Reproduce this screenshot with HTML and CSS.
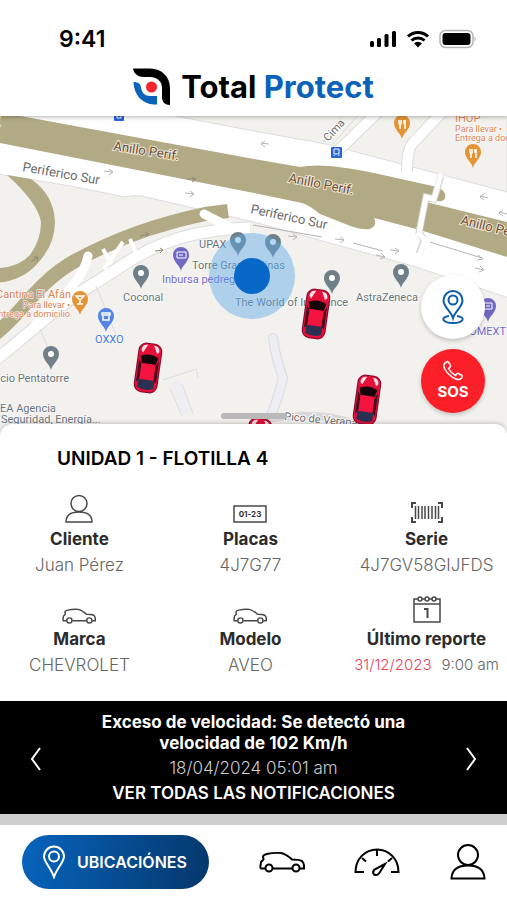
FILE: index.html
```html
<!DOCTYPE html>
<html lang="es">
<head>
    <meta charset="UTF-8">
    <meta name="viewport" content="width=device-width, initial-scale=1.0">
    <title>Total Protect</title>
    <link rel="stylesheet" href="styles.css">
</head>
<body>
    <header class="header">
        <div class="status-bar">
            <span class="clock">9:41</span>
            <div class="status-icons">
                <svg width="28" height="18" viewBox="0 0 28 18">
                    <rect x="1" y="11" width="4" height="6" rx="1.5"/>
                    <rect x="8" y="8" width="4" height="9" rx="1.5"/>
                    <rect x="15.5" y="4" width="4" height="13" rx="1.5"/>
                    <rect x="23" y="1" width="4" height="16" rx="1.5"/>
                </svg>
                <svg width="24" height="18" viewBox="0 0 24 18">
                    <path d="M2 6.5a14.5 14.5 0 0 1 20 0M5.5 10.5a9.5 9.5 0 0 1 13 0" fill="none" stroke="#000" stroke-width="3"/>
                    <path d="M8 13.2a6 6 0 0 1 8 0L12 17.5z"/>
                </svg>
                <svg width="38" height="20" viewBox="0 0 38 20">
                    <rect x="1" y="1.5" width="33" height="17" rx="5.5" fill="#fff" stroke="#b5b5b5" stroke-width="1.5"/>
                    <rect x="3.5" y="4" width="28" height="12" rx="3"/>
                    <path d="M35.5 7.5q2.5 2.5 0 5z" fill="#b5b5b5"/>
                </svg>
            </div>
        </div>
        <div class="brand">
            <svg width="37" height="37" viewBox="0 0 37 37">
                <path d="M0 .5H17C29 .5 37 9 37 20V37C32 37 29 34 29 29V20C29 13 24 9 17 9H11C5 9 1 6 0 .5z"/>
                <path d="M.5 14C5 14 8 16 8 20C9 25 12 28 17 28H24V36.5H21C9 36 1 27 .5 14z" fill="#0b62b9"/>
                <circle cx="18.5" cy="19" r="5.5" fill="#f5232d"/>
            </svg>
            <span class="brand-name">Total <span class="brand-blue">Protect</span></span>
        </div>
    </header>

    <main>
        <section class="map">
            <svg class="map-canvas" viewBox="0 116 507 320" preserveAspectRatio="xMidYMin slice">
                <defs>
                    <g id="pin">
                        <path d="M0 14C-1 8-8 5-8-2A8 8 0 0 1 8-2C8 5 1 8 0 14z"/>
                    </g>
                    <g id="car">
                        <rect x="-12" y="-25" width="24" height="50" rx="8" fill="#7d0c2c"/>
                        <rect x="-11" y="-24" width="22" height="48" rx="7" fill="#e4103a"/>
                        <path d="M-9-17Q-9-23-3-23L-7-15zM9-17Q9-23 3-23L7-15z" fill="#ffe1e5"/>
                        <path d="M-9-11Q0-16 9-11L7-4H-7z" fill="#16060c"/>
                        <path d="M-10-8L-7-3V12L-10 15zM10-8L7-3V12L10 15z" fill="#4a0a1e"/>
                        <rect x="-7" y="-4" width="14" height="16" fill="#f5143f"/>
                        <path d="M-8 12H8L8 20Q0 24-8 20z" fill="#2c3050"/>
                    </g>
                </defs>
                <rect x="0" y="116" width="507" height="320" fill="#fff"/>

                <!-- manzanas -->
                <g fill="#f2f1ed" stroke="#dcdcdc">
                    <path d="M170 115L254 131L326 144L507 192V115z"/>
                    <path d="M-2 174L70 186L125 197Q138 194 150 198L254 222L413 266L509 298V440H-2z"/>
                </g>

                <!-- calles -->
                <g fill="none" stroke-linejoin="round">
                    <path d="M378 112L343 146L336 152M442 112L413 143Q407 149 407 172" stroke="#dcdcdc" stroke-width="12"/>
                    <path d="M378 112L343 146L336 152M442 112L413 143Q407 149 407 172" stroke="#fff" stroke-width="10"/>
                    <path d="M343 115L323 142M358 115L333 144" stroke="#dcdcdc"/>
                    <path d="M7 175L31 179Q54 195 55 222Q55 245 37 264Q22 281-4 283V268Q18 268 30 255Q41 240 41 222Q38 203 7 175z" fill="#b1aa84"/>
                    <path d="M-5 334C20 316 37 282 75 261Q133 229 205 214L228 211" stroke="#b1aa84" stroke-width="14"/>
                    <path d="M-6 361C26 337 60 303 90 286C132 261 162 230 250 228" stroke="#dcdcdc" stroke-width="13"/>
                    <path d="M-6 361C26 337 60 303 90 286C132 261 162 230 250 228" stroke="#fff" stroke-width="11"/>
                    <path d="M88 256C82 285 54 302 35 325M204 214L235 230" stroke="#fff" stroke-width="9" stroke-linecap="round"/>
                    <path d="M103 249L111 264M123 242L104 269M130 239L138 258" stroke="#fff" stroke-width="4"/>
                    <path d="M273 338Q276 360 283 378Q279 395 271 416" stroke="#d8dbe2" stroke-width="10" stroke-linecap="round"/>
                    <path d="M273 338Q276 360 283 378Q279 395 271 416" stroke="#eceef1" stroke-width="8" stroke-linecap="round"/>
                    <path d="M96 286L108 315L120 345M40 329L46 343L52 366M163 380L196 369L198 378M170 388L182 416M182 384L193 414" stroke="#dadce4"/>
                    <path d="M250 422Q312 409 352 423" stroke="#d8d8d8" stroke-width="8"/>
                    <path d="M176 381L186 414" stroke="#eceef1" stroke-width="9"/>
                </g>

                <!-- anillo periferico -->
                <path d="M-2 115H15L254 159L300 167Q322 162 374 173L437 187Q447 191 445 198Q443 202 438 201L426 202L507 222V257L420 230L374 218Q378 225 370 229Q363 230 353 227L320 214Q309 205 302 203L254 193L0 143z" fill="#b1aa84"/>
                <path d="M441 176L434 199L426 197L419 232L424 240L419 254" fill="none" stroke="#d9d9d9" stroke-width="7"/>
                <path d="M441 174L434 199L426 197L419 234L425 240L419 256" fill="none" stroke="#fff" stroke-width="5"/>

                <!-- sentido de circulacion -->
                <g fill="none" stroke="#b4b4b4">
                    <path d="M104 171L112 172M109 169L113 172L109 175M185 193L194 194M190 191L194 194L190 197M269 144L261 143M265 141L261 144L265 147M288 236L297 237M293 234L297 237L293 240M335 239L344 240M340 237L344 240L340 243M390 250L399 251M395 248L399 251L395 254M376 255L385 257M381 253L385 257L380 259M488 198L480 196M484 194L480 197L484 200M507 214L499 212M503 210L499 213L503 216M430 242L482 258M478 255L483 259L477 260M475 268L484 270M480 266L484 270L479 272M253 225L322 237M353 243L383 251"/>
                    <path d="M187 179L196 179M192 177L196 179L192 182M140 236L149 234M145 232L149 234L146 237M155 251L163 250M160 248L163 250L160 253M31 262L38 257M34 257L38 257L37 261" stroke="#8f8a70"/>
                </g>

                <g class="road-name road-name-dark">
                    <text transform="translate(1 127) rotate(11)" text-anchor="end">Anillo Perif.</text>
                    <text transform="translate(113 150) rotate(9)">Anillo Perif.</text>
                    <text transform="translate(288 182) rotate(11)">Anillo Perif.</text>
                    <text transform="translate(460 224) rotate(14)">Anillo Perif.</text>
                </g>
                <g class="road-name">
                    <text transform="translate(22 171) rotate(10)">Periferico Sur</text>
                    <text transform="translate(250 213) rotate(12)">Periferico Sur</text>
                    <text class="road-small" transform="translate(328 142) rotate(-47)">Cima</text>
                    <text class="road-small" transform="translate(284 420) rotate(5)">Pico de Verapaz</text>
                </g>

                <!-- lugares -->
                <g fill="#6f8088">
                    <use href="#pin" x="238" y="242"/><use href="#pin" x="273" y="244"/>
                    <use href="#pin" x="141" y="275"/><use href="#pin" x="51" y="356"/>
                    <use href="#pin" x="332" y="280"/><use href="#pin" x="401" y="274"/>
                </g>
                <g fill="#fff">
                    <circle cx="238" cy="240" r="3"/><circle cx="273" cy="242" r="3"/>
                    <circle cx="141" cy="273" r="3"/><circle cx="51" cy="354" r="3"/>
                    <circle cx="332" cy="278" r="3"/><circle cx="401" cy="272" r="3"/>
                </g>
                <g fill="#e59435">
                    <use href="#pin" x="402" y="125"/><use href="#pin" x="473" y="154"/><use href="#pin" x="80" y="301"/>
                </g>
                <path d="M399 120V123Q401 126 401 123V120M400 124V129M405 120V129M404 120V124M470 149V152Q472 155 472 152V149M471 153V158M476 149V158M475 149V153M76 296H84L80 300zM80 300V304M77 304H83" fill="none" stroke="#fff" stroke-width="1.5"/>
                <use href="#pin" x="106" y="318" fill="#5485e4"/>
                <path d="M102 313H110V315H102zM103 316V320H109V316" fill="none" stroke="#fff" stroke-width="1.5"/>
                <g fill="#7268c4"><use href="#pin" x="181" y="257"/><use href="#pin" x="488" y="308"/></g>
                <path d="M177 252H186V258H177zM179 255H183M484 303H492V309H484zM486 306H490" fill="none" stroke="#fff"/>
                <g fill="#2864d4">
                    <rect x="331" y="147" width="11" height="11" rx="1"/><rect x="114" y="111" width="10" height="10" rx="1"/>
                    <path d="M334 149H339V154H334zM334 155V156M339 155V156M117 115H121V118H117z" fill="none" stroke="#fff"/>
                </g>

                <g class="place">
                    <text x="199" y="248">UPAX</text>
                    <text x="192" y="269">Torre Gran Molinas</text>
                    <text x="123" y="301">Coconal</text>
                    <text x="235" y="306">The World of Insurance</text>
                    <text x="356" y="301">AstraZeneca</text>
                    <text x="69" y="382" text-anchor="end">Edificio Pentatorre</text>
                    <text x="0" y="412">EA Agencia</text>
                    <text x="1" y="423">Seguridad, Energía...</text>
                    <text class="blue" x="95" y="343">OXXO</text>
                    <text class="purple" x="162" y="283">Inbursa pedregal</text>
                    <text class="purple" x="506" y="335" text-anchor="end">COMEXT</text>
                    <text class="orange" x="71" y="298" text-anchor="end">Cantina El Afán</text>
                    <text class="orange tiny" x="70" y="308" text-anchor="end">Para llevar •</text>
                    <text class="orange tiny" x="70" y="317" text-anchor="end">Entrega a domicilio</text>
                    <text class="orange" x="455" y="122">IHOP</text>
                    <text class="orange tiny" x="455" y="132">Para llevar •</text>
                    <text class="orange tiny" x="455" y="141">Entrega a domicilio</text>
                </g>

                <!-- posicion actual -->
                <circle cx="252" cy="276" r="43" fill="#5ca8e8" fill-opacity=".45"/>
                <circle cx="252" cy="276" r="18" fill="#0868c8"/>

                <!-- unidades -->
                <use href="#car" transform="translate(148 368) rotate(8)"/>
                <use href="#car" transform="translate(316 314) rotate(8)"/>
                <use href="#car" transform="translate(367 400) rotate(8)"/>
                <use href="#car" transform="translate(258 443) rotate(8)"/>
            </svg>
            <div class="map-buttons">
                <button class="round-button" type="button" aria-label="Ubicación">
                    <svg width="24" height="36" viewBox="0 0 24 36" fill="none" stroke="#0b5caf" stroke-width="2">
                        <path d="M12 29C10 22 2.5 18 2.5 11.5A9.5 9.5 0 0 1 21.5 11.5C21.5 18 14 22 12 29z"/>
                        <circle cx="12" cy="11" r="4.5"/>
                        <path d="M8 27C-1 28 1 34 12 34S25 28 16 27"/>
                    </svg>
                </button>
                <button class="round-button sos" type="button">
                    <svg width="22" height="22" viewBox="0 0 22 22" fill="none" stroke="#fff" stroke-width="1.5" stroke-linejoin="round">
                        <path d="M3 3L5.5 1.5Q6.5 1.5 8.5 5.5Q9 6.5 6.5 8.5Q9 13 13.5 15.5Q15.5 12.5 16.5 13.5L20 15.5Q20.5 16.5 19.5 18Q17.5 20.5 14 19Q6.5 16 2.5 8.5Q1 5 3 3z"/>
                    </svg>
                    SOS
                </button>
            </div>
            <div class="handle"></div>
        </section>

        <section class="sheet">
            <h1 class="unit-title">UNIDAD 1 - FLOTILLA 4</h1>
            <dl class="details">
                <div class="detail">
                    <svg width="28" height="30" viewBox="0 0 28 30">
                        <circle cx="14" cy="9.5" r="8"/>
                        <path d="M1 28Q1 18 14 18T27 28z"/>
                    </svg>
                    <dt>Cliente</dt>
                    <dd>Juan Pérez</dd>
                </div>
                <div class="detail">
                    <svg width="34" height="30" viewBox="0 0 34 30">
                        <rect x="1" y="12" width="32" height="16"/>
                        <text class="plate" x="17" y="23" text-anchor="middle">01-23</text>
                    </svg>
                    <dt>Placas</dt>
                    <dd>4J7G77</dd>
                </div>
                <div class="detail">
                    <svg width="34" height="30" viewBox="0 0 34 30">
                        <path d="M6 9H2V14M28 9H32V14M6 28H2V23M28 28H32V23" stroke-width="2"/>
                        <path d="M5.5 12V25M8.5 12V25M12 12V25M15 12V25M18.5 12V25M22 12V25M25.5 12V25M28.5 12V25"/>
                    </svg>
                    <dt>Serie</dt>
                    <dd>4J7GV58GIJFDS</dd>
                </div>
                <div class="detail">
                    <svg class="car-icon" width="34" height="32" viewBox="0 -13 46 43">
                        <path d="M6 24.5H2.5Q1 24.5 1.5 22L2 18L4.5 15.5L4 12.5Q4 11 8 10Q14 8.5 22 9Q27 10 33 15.5Q40 15.5 43 17Q45.5 19 45 24.5H41M14 24.5H33"/>
                        <circle cx="10" cy="24" r="3.5"/><circle cx="37" cy="24" r="3.5"/>
                    </svg>
                    <dt>Marca</dt>
                    <dd>CHEVROLET</dd>
                </div>
                <div class="detail">
                    <svg class="car-icon" width="34" height="32" viewBox="0 -13 46 43">
                        <path d="M6 24.5H2.5Q1 24.5 1.5 22L2 18L4.5 15.5L4 12.5Q4 11 8 10Q14 8.5 22 9Q27 10 33 15.5Q40 15.5 43 17Q45.5 19 45 24.5H41M14 24.5H33"/>
                        <circle cx="10" cy="24" r="3.5"/><circle cx="37" cy="24" r="3.5"/>
                    </svg>
                    <dt>Modelo</dt>
                    <dd>AVEO</dd>
                </div>
                <div class="detail">
                    <svg width="28" height="30" viewBox="0 0 28 30">
                        <path d="M1 5H27V28H1zM1 10H27"/>
                        <circle cx="7" cy="5" r="2" fill="#fff"/><circle cx="14" cy="5" r="2" fill="#fff"/><circle cx="21" cy="5" r="2" fill="#fff"/>
                        <path class="day" d="M11 15H14.5V24"/>
                    </svg>
                    <dt>Último reporte</dt>
                    <dd class="report"><span class="date">31/12/2023</span><span>9:00 am</span></dd>
                </div>
            </dl>
        </section>

        <section class="alert">
            <button class="arrow" type="button" aria-label="Anterior">
                <svg width="12" height="24" viewBox="0 0 12 24"><path d="M10 1L2 12L10 23"/></svg>
            </button>
            <div class="alert-text">
                <p class="alert-title">Exceso de velocidad: Se detectó una velocidad de 102 Km/h</p>
                <p class="alert-date">18/04/2024 05:01 am</p>
                <a class="alert-link" href="#notificaciones">VER TODAS LAS NOTIFICACIONES</a>
            </div>
            <button class="arrow" type="button" aria-label="Siguiente">
                <svg width="12" height="24" viewBox="0 0 12 24"><path d="M2 1L10 12L2 23"/></svg>
            </button>
        </section>
    </main>

    <nav class="tab-bar">
        <a class="tab-active" href="#ubicaciones">
            <svg width="24" height="34" viewBox="0 0 24 34" fill="none" stroke="#fff" stroke-width="2">
                <path d="M12 32C9 23 2 17 2 11.5A10 10 0 0 1 22 11.5C22 17 15 23 12 32z"/>
                <circle cx="12" cy="11.5" r="5"/>
            </svg>
            UBICACIÓNES
        </a>
        <a class="tab" href="#unidades" aria-label="Unidades">
            <svg width="46" height="36" viewBox="0 0 46 36">
                <path d="M6 24.5H2.5Q1 24.5 1.5 22L2 18L4.5 15.5L4 12.5Q4 11 8 10Q14 8.5 22 9Q27 10 33 15.5Q40 15.5 43 17Q45.5 19 45 24.5H41M14 24.5H33"/>
                <circle cx="10" cy="24" r="3.5"/><circle cx="37" cy="24" r="3.5"/>
            </svg>
        </a>
        <a class="tab" href="#velocidad" aria-label="Velocidad">
            <svg width="46" height="36" viewBox="0 0 46 36">
                <path d="M10 28H1.5C1.5 15 11 5.5 23 5.5S44.5 15 44.5 28H37M23 5.5V12M8 14L12 17.5M38 14L34 17.5"/>
                <path d="M31 20L20.5 25.5Q18 28 20 30.5Q23 32 25 29.5z"/>
            </svg>
        </a>
        <a class="tab" href="#perfil" aria-label="Perfil">
            <svg width="36" height="36" viewBox="0 0 36 36">
                <circle cx="18" cy="11" r="10"/>
                <path d="M1.5 34.5Q2 21.5 18 21.5T34.5 34.5z"/>
            </svg>
        </a>
    </nav>
</body>
</html>
```
FILE: styles.css
```css
* {
    box-sizing: border-box;
}
body {
    margin: 0;
    background-color: #fff;
    color: #000;
    font-family: Inter, "Liberation Sans", sans-serif;
}
button {
    border: none;
    padding: 0;
    background: none;
    font-family: inherit;
    cursor: pointer;
}
a {
    color: inherit;
    text-decoration: none;
}
svg {
    display: block;
}

/* cabecera */
.header {
    position: relative;
    z-index: 1;
    background-color: #fff;
    padding-bottom: 11px;
    box-shadow: 0 1px 4px rgba(0, 0, 0, 0.3);
}
.status-bar {
    display: flex;
    justify-content: space-between;
    align-items: center;
    padding: 25px 30px 0 59px;
}
.clock {
    font-size: 23px;
    line-height: 28px;
    font-weight: 600;
}
.status-icons {
    display: flex;
    align-items: center;
    gap: 9px;
}
.brand {
    display: flex;
    justify-content: center;
    align-items: center;
    gap: 11px;
    margin-top: 15px;
}
.brand-name {
    font-size: 31px;
    line-height: 36px;
    font-weight: 700;
}
.brand-blue {
    color: #0b62b9;
}

/* mapa */
.map {
    position: relative;
    height: 320px;
    overflow: hidden;
}
.map-canvas {
    width: 100%;
    height: 100%;
    font-family: Roboto, sans-serif;
}
.road-name {
    font-size: 13px;
    fill: #6b6b6b;
    stroke: #fff;
    stroke-width: 2px;
    paint-order: stroke;
}
.road-name-dark {
    fill: #6b4d35;
    stroke: #efe6d6;
}
.road-small {
    font-size: 11px;
}
.place {
    font-size: 11px;
    fill: #66737b;
    stroke: #fff;
    stroke-width: 1px;
    paint-order: stroke;
}
.place .blue {
    fill: #3f76df;
}
.place .purple {
    fill: #7268c4;
}
.place .orange {
    fill: #dc8350;
}
.place .tiny {
    font-size: 9px;
}
.map-buttons {
    position: absolute;
    top: 159px;
    right: 22px;
    display: flex;
    flex-direction: column;
    gap: 10px;
}
.round-button {
    display: flex;
    flex-direction: column;
    justify-content: center;
    align-items: center;
    width: 64px;
    height: 64px;
    border-radius: 50%;
    background-color: #fff;
    box-shadow: 0 2px 4px rgba(0, 0, 0, 0.2);
}
.sos {
    background-color: #fb2027;
    color: #fff;
    font-size: 15px;
    line-height: 20px;
    font-weight: 700;
}
.handle {
    position: absolute;
    left: 50%;
    bottom: 17px;
    width: 66px;
    height: 6px;
    margin-left: -33px;
    border-radius: 3px;
    background-color: #b9b9b9;
}

/* datos de la unidad */
.sheet {
    position: relative;
    z-index: 1;
    margin-top: -12px;
    padding: 23px 0 24px 4px;
    border-radius: 12px 12px 0 0;
    background-color: #fff;
    box-shadow: 0 -1px 4px rgba(0, 0, 0, 0.2);
}
.unit-title {
    margin: 0 0 22px 53px;
    font-size: 19px;
    line-height: 24px;
    font-weight: 600;
}
.details {
    display: grid;
    grid-template-columns: 15fr 19fr 16fr;
    row-gap: 16px;
    margin: 0;
}
.detail {
    display: flex;
    flex-direction: column;
    align-items: center;
    gap: 2px;
    font-size: 17px;
    line-height: 24px;
}
.detail svg {
    height: 32px;
    fill: none;
    stroke: #484848;
    stroke-width: 1.5px;
}
.detail .car-icon,
.detail .day {
    stroke-width: 2px;
}
.detail .plate {
    fill: #333;
    stroke: none;
    font-size: 8px;
    font-weight: 700;
}
.detail dt {
    color: #2b2b2b;
    font-weight: 700;
}
.detail dd {
    margin: 0;
    color: #666;
    font-weight: 300;
}
.detail .report {
    display: flex;
    gap: 10px;
    font-size: 15px;
}
.report .date {
    color: #e8455c;
}

/* aviso */
.alert {
    display: flex;
    justify-content: space-between;
    align-items: center;
    padding: 11px 30px 8px;
    background-color: #000;
    color: #fff;
    text-align: center;
}
.alert-text {
    display: flex;
    flex-direction: column;
    align-items: center;
    max-width: 330px;
}
.alert p {
    margin: 0;
}
.alert .alert-title {
    margin-bottom: 2px;
    font-size: 17px;
    line-height: 21px;
    font-weight: 700;
}
.alert-date {
    color: #ccc;
    font-size: 17px;
    line-height: 25px;
    font-weight: 300;
}
.alert-link {
    font-size: 17px;
    line-height: 25px;
    font-weight: 600;
}
.arrow svg {
    fill: none;
    stroke: #fff;
    stroke-width: 2px;
}

/* barra inferior */
.tab-bar {
    display: flex;
    justify-content: space-between;
    align-items: center;
    padding: 10px 21px 11px 22px;
    border-top: 11px solid #cfcfcf;
    background-color: #fff;
}
.tab-active {
    display: flex;
    align-items: center;
    gap: 11px;
    height: 54px;
    padding: 0 22px 0 20px;
    border-radius: 27px;
    background: linear-gradient(100deg, #0764bd, #05376a);
    color: #fff;
    font-size: 16px;
    font-weight: 600;
}
.tab svg {
    fill: none;
    stroke: #000;
    stroke-width: 2px;
}
```
